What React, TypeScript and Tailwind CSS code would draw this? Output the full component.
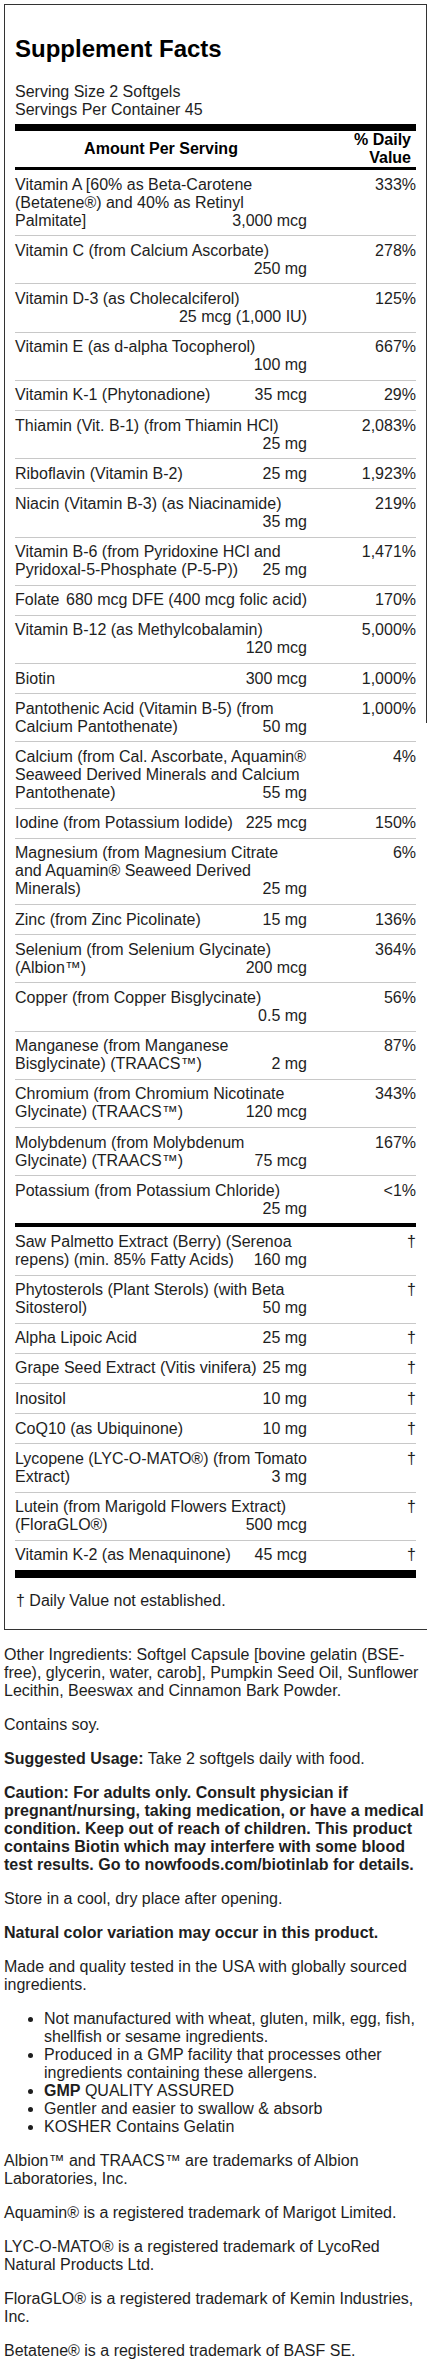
type Row = {
  lines: string[];
  amount: string;
  dv: string;
};

// amount sits on the last entry of `lines`; an empty last entry puts it on its own line
const vitamins: Row[] = [
  {
    lines: ["Vitamin A [60% as Beta-Carotene", "(Betatene®) and 40% as Retinyl", "Palmitate]"],
    amount: "3,000 mcg",
    dv: "333%",
  },
  { lines: ["Vitamin C (from Calcium Ascorbate)", ""], amount: "250 mg", dv: "278%" },
  { lines: ["Vitamin D-3 (as Cholecalciferol)", ""], amount: "25 mcg (1,000 IU)", dv: "125%" },
  { lines: ["Vitamin E (as d-alpha Tocopherol)", ""], amount: "100 mg", dv: "667%" },
  { lines: ["Vitamin K-1 (Phytonadione)"], amount: "35 mcg", dv: "29%" },
  { lines: ["Thiamin (Vit. B-1) (from Thiamin HCl)", ""], amount: "25 mg", dv: "2,083%" },
  { lines: ["Riboflavin (Vitamin B-2)"], amount: "25 mg", dv: "1,923%" },
  { lines: ["Niacin (Vitamin B-3) (as Niacinamide)", ""], amount: "35 mg", dv: "219%" },
  {
    lines: ["Vitamin B-6 (from Pyridoxine HCl and", "Pyridoxal-5-Phosphate (P-5-P))"],
    amount: "25 mg",
    dv: "1,471%",
  },
  { lines: ["Folate"], amount: "680 mcg DFE (400 mcg folic acid)", dv: "170%" },
  { lines: ["Vitamin B-12 (as Methylcobalamin)", ""], amount: "120 mcg", dv: "5,000%" },
  { lines: ["Biotin"], amount: "300 mcg", dv: "1,000%" },
  {
    lines: ["Pantothenic Acid (Vitamin B-5) (from", "Calcium Pantothenate)"],
    amount: "50 mg",
    dv: "1,000%",
  },
  {
    lines: [
      "Calcium (from Cal. Ascorbate, Aquamin®",
      "Seaweed Derived Minerals and Calcium",
      "Pantothenate)",
    ],
    amount: "55 mg",
    dv: "4%",
  },
  { lines: ["Iodine (from Potassium Iodide)"], amount: "225 mcg", dv: "150%" },
  {
    lines: ["Magnesium (from Magnesium Citrate", "and Aquamin® Seaweed Derived", "Minerals)"],
    amount: "25 mg",
    dv: "6%",
  },
  { lines: ["Zinc (from Zinc Picolinate)"], amount: "15 mg", dv: "136%" },
  {
    lines: ["Selenium (from Selenium Glycinate)", "(Albion™)"],
    amount: "200 mcg",
    dv: "364%",
  },
  { lines: ["Copper (from Copper Bisglycinate)", ""], amount: "0.5 mg", dv: "56%" },
  { lines: ["Manganese (from Manganese", "Bisglycinate) (TRAACS™)"], amount: "2 mg", dv: "87%" },
  {
    lines: ["Chromium (from Chromium Nicotinate", "Glycinate) (TRAACS™)"],
    amount: "120 mcg",
    dv: "343%",
  },
  {
    lines: ["Molybdenum (from Molybdenum", "Glycinate) (TRAACS™)"],
    amount: "75 mcg",
    dv: "167%",
  },
  { lines: ["Potassium (from Potassium Chloride)", ""], amount: "25 mg", dv: "<1%" },
];

const others: Row[] = [
  {
    lines: ["Saw Palmetto Extract (Berry) (Serenoa", "repens) (min. 85% Fatty Acids)"],
    amount: "160 mg",
    dv: "†",
  },
  {
    lines: ["Phytosterols (Plant Sterols) (with Beta", "Sitosterol)"],
    amount: "50 mg",
    dv: "†",
  },
  { lines: ["Alpha Lipoic Acid"], amount: "25 mg", dv: "†" },
  { lines: ["Grape Seed Extract (Vitis vinifera)"], amount: "25 mg", dv: "†" },
  { lines: ["Inositol"], amount: "10 mg", dv: "†" },
  { lines: ["CoQ10 (as Ubiquinone)"], amount: "10 mg", dv: "†" },
  {
    lines: ["Lycopene (LYC-O-MATO®) (from Tomato", "Extract)"],
    amount: "3 mg",
    dv: "†",
  },
  {
    lines: ["Lutein (from Marigold Flowers Extract)", "(FloraGLO®)"],
    amount: "500 mcg",
    dv: "†",
  },
  { lines: ["Vitamin K-2 (as Menaquinone)"], amount: "45 mcg", dv: "†" },
];

function FactRow({ row }: { row: Row }) {
  const head = row.lines.slice(0, -1);
  const last = row.lines[row.lines.length - 1];
  return (
    <div className="flex border-b border-[#c8c8c8] pt-[5.6px] pb-[5.6px] last:border-b-0">
      <div className="w-[292px] shrink-0">
        {head.map((line) => (
          <div key={line} className="whitespace-nowrap">
            {line}
          </div>
        ))}
        <div className="flex justify-between whitespace-nowrap">
          <span>{last}</span>
          <span>{row.amount}</span>
        </div>
      </div>
      <div className="flex-1 text-right">{row.dv}</div>
    </div>
  );
}

export default function App() {
  return (
    <div className="min-h-screen bg-white pt-[4px] pl-[4px] pr-[5px] font-['Liberation_Sans',Arial,sans-serif] text-[16px] leading-[18px] text-[#1e1e1e]">
      <div className="border-t border-b border-l border-[#333] bg-[linear-gradient(#333,#333)] bg-no-repeat bg-[length:1px_718px] bg-[position:right_top] pt-[30px] pb-[19px] pl-[10px] pr-[11px]">
        <h1 className="text-[24px] leading-[28px] font-bold text-black">Supplement Facts</h1>
        <div className="mt-[20px]">
          <div>Serving Size 2 Softgels</div>
          <div>Servings Per Container 45</div>
        </div>

        <div className="mt-[5px] h-[7px] bg-black" />
        <div className="flex h-[36px] font-bold text-black">
          <div className="flex w-[292px] shrink-0 items-center justify-center">
            Amount Per Serving
          </div>
          <div className="flex-1 pr-[5px] text-right">
            % Daily
            <br />
            Value
          </div>
        </div>
        <div className="h-[3px] bg-black" />

        <div>
          {vitamins.map((row) => (
            <FactRow key={row.lines[0]} row={row} />
          ))}
        </div>

        <div className="h-[4px] bg-black" />

        <div>
          {others.map((row) => (
            <FactRow key={row.lines[0]} row={row} />
          ))}
        </div>

        <div className="h-[8px] bg-black" />
        <p className="mt-[14px] pl-[1px]">† Daily Value not established.</p>
      </div>

      <p className="my-4">
        Other Ingredients: Softgel Capsule [bovine gelatin (BSE-
        <br />
        free), glycerin, water, carob], Pumpkin Seed Oil, Sunflower
        <br />
        Lecithin, Beeswax and Cinnamon Bark Powder.
      </p>
      <p className="my-4">Contains soy.</p>
      <p className="my-4">
        <b>Suggested Usage:</b> Take 2 softgels daily with food.
      </p>
      <p className="my-4 font-bold">
        Caution: For adults only. Consult physician if
        <br />
        pregnant/nursing, taking medication, or have a medical
        <br />
        condition. Keep out of reach of children. This product
        <br />
        contains Biotin which may interfere with some blood
        <br />
        test results. Go to nowfoods.com/biotinlab for details.
      </p>
      <p className="my-4">Store in a cool, dry place after opening.</p>
      <p className="my-4 font-bold">Natural color variation may occur in this product.</p>
      <p className="my-4">
        Made and quality tested in the USA with globally sourced
        <br />
        ingredients.
      </p>
      <ul className="my-4 list-disc pl-[40px]">
        <li>
          Not manufactured with wheat, gluten, milk, egg, fish,
          <br />
          shellfish or sesame ingredients.
        </li>
        <li>
          Produced in a GMP facility that processes other
          <br />
          ingredients containing these allergens.
        </li>
        <li>
          <b>GMP</b> QUALITY ASSURED
        </li>
        <li>Gentler and easier to swallow &amp; absorb</li>
        <li>KOSHER Contains Gelatin</li>
      </ul>
      <p className="my-4">
        Albion™ and TRAACS™ are trademarks of Albion
        <br />
        Laboratories, Inc.
      </p>
      <p className="my-4">Aquamin® is a registered trademark of Marigot Limited.</p>
      <p className="my-4">
        LYC-O-MATO® is a registered trademark of LycoRed
        <br />
        Natural Products Ltd.
      </p>
      <p className="my-4">
        FloraGLO® is a registered trademark of Kemin Industries,
        <br />
        Inc.
      </p>
      <p className="my-4">Betatene® is a registered trademark of BASF SE.</p>
    </div>
  );
}
